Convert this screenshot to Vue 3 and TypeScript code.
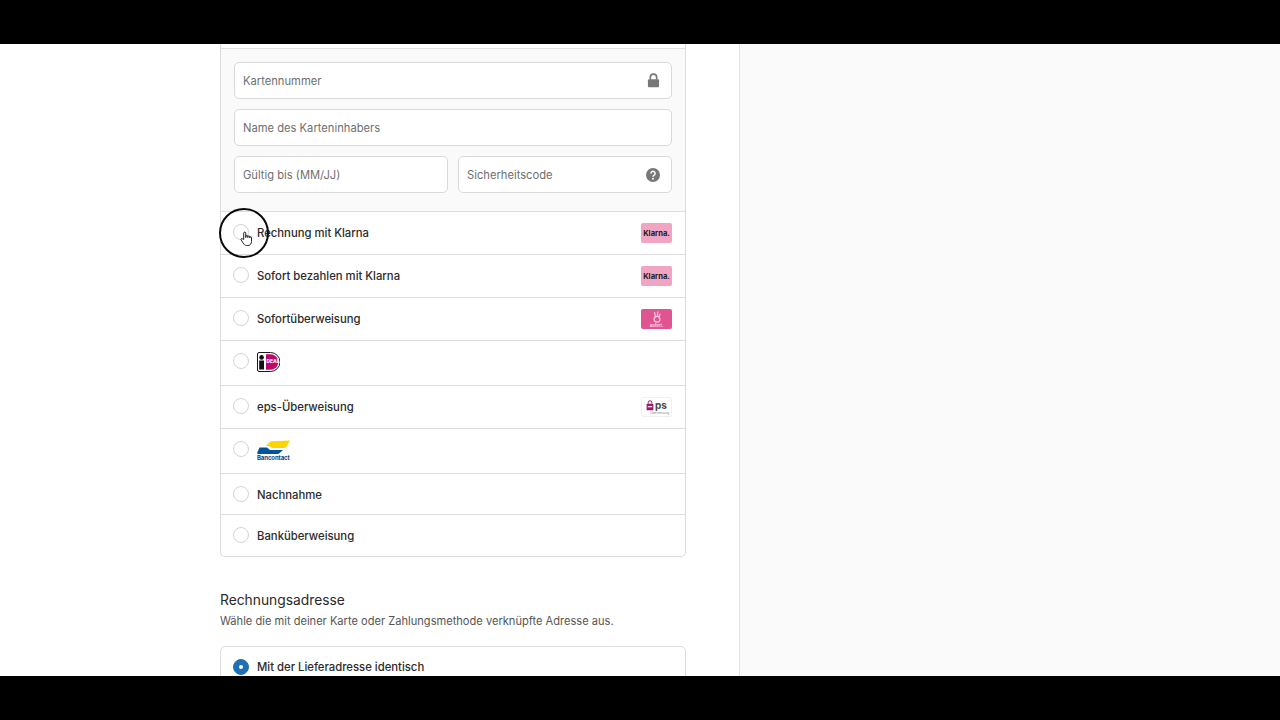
<script setup lang="ts">
interface Row { id: string; label?: string; logo?: string; badge?: string; h: number }
const rows: Row[] = [
  { id: 'r1', label: 'Rechnung mit Klarna', badge: 'klarna', h: 43 },
  { id: 'r2', label: 'Sofort bezahlen mit Klarna', badge: 'klarna', h: 43 },
  { id: 'r3', label: 'Sofortüberweisung', badge: 'sofort', h: 43 },
  { id: 'r4', logo: 'ideal', h: 45 },
  { id: 'r5', label: 'eps-Überweisung', badge: 'eps', h: 43 },
  { id: 'r6', logo: 'bancontact', h: 45 },
  { id: 'r7', label: 'Nachnahme', h: 41 },
  { id: 'r8', label: 'Banküberweisung', h: 42 },
]
</script>

<template>
  <div class="frame">
    <div class="bar top"></div>
    <main class="stage">
      <section class="left">
        <div class="column">
          <div class="card">
            <div class="strip"></div>
            <div class="panel">
              <div class="field">
                <span>Kartennummer</span>
                <svg class="ficon" viewBox="0 0 14 16" width="13" height="15">
                  <path d="M3.6 7V4.6a3.4 3.4 0 0 1 6.8 0V7" fill="none" stroke="#777" stroke-width="1.8" />
                  <rect x="1" y="6.6" width="12" height="8.6" rx="1" fill="#777" />
                </svg>
              </div>
              <div class="field"><span>Name des Karteninhabers</span></div>
              <div class="split">
                <div class="field"><span>Gültig bis (MM/JJ)</span></div>
                <div class="field">
                  <span>Sicherheitscode</span>
                  <svg class="ficon" viewBox="0 0 14 14" width="14" height="14">
                    <circle cx="7" cy="7" r="7" fill="#777" />
                    <path d="M4.9 5.4a2.1 2.1 0 1 1 3.2 1.8c-.7.4-1.1.8-1.1 1.5" fill="none" stroke="#fff" stroke-width="1.5" />
                    <circle cx="7" cy="10.8" r=".95" fill="#fff" />
                  </svg>
                </div>
              </div>
            </div>
            <div v-for="r in rows" :key="r.id" class="row" :style="{ height: r.h + 'px' }">
              <span class="radio"></span>
              <span v-if="r.label" class="label">{{ r.label }}</span>
              <svg v-if="r.logo === 'ideal'" class="ideal" viewBox="0 0 23 20" width="23" height="20">
                <path d="M.5 2A1.500 1.500 0 0 1 2 .5h11.500a9.500 9.500 0 0 1 0 19H2A1.500 1.500 0 0 1 .5 18z" fill="#fff" stroke="#1a1a1a" stroke-width="1" />
                <path d="M9 2.200h4.500a7.800 7.800 0 0 1 0 15.600H9z" fill="#c0066b" />
                <rect x="2.200" y="8.500" width="4.800" height="9" fill="#111" />
                <circle cx="4.600" cy="5.400" r="2.300" fill="#111" />
                <text x="9.600" y="10.800" class="ideal-t">DEAL</text>
              </svg>
              <span v-if="r.logo === 'bancontact'" class="banco">
                <svg viewBox="0 0 33 14" width="33" height="14">
                  <path d="M2.500 7.500h7.500l3 2.500h13l-3.500 3.300c-.5.5-1 .7-1.700.7H1.500C.4 14 0 13.300.3 12.500z" fill="#00549c" />
                  <path d="M15 1.200 33 .5l-3.200 5.800c-.6 1-1.300 1.700-2.500 1.700H15.500L12 6H8.800L12.500 2.300c.7-.7 1.500-1.100 2.500-1.100z" fill="#fbd500" />
                </svg>
                <span class="banco-t">Bancontact</span>
              </span>
              <span v-if="r.badge === 'klarna'" class="badge klarna">Klarna.</span>
              <span v-if="r.badge === 'sofort'" class="badge sofort">
                <svg viewBox="0 0 10 12" width="10" height="12">
                  <path d="M3.400 6 2.600 1.400M5.200 5.500 5.800 .8M7 6.500 8 3" fill="none" stroke="#f9c9dc" stroke-width="1.200" stroke-linecap="round" />
                  <circle cx="5" cy="8.200" r="2.900" fill="none" stroke="#f9c9dc" stroke-width="1.300" />
                </svg>
                <span class="sofort-t">Sofort.</span>
              </span>
              <span v-if="r.badge === 'eps'" class="badge eps">
                <span class="eps-main">
                  <svg viewBox="0 0 9 12" width="8" height="11">
                    <path d="M2.500 4V2.600a2 2 0 0 1 4 0V4" fill="none" stroke="#a3156d" stroke-width="1.100" />
                    <rect x=".7" y="4" width="7.600" height="7.400" rx="1" fill="#a3156d" />
                    <rect x="2" y="6.700" width="5" height="1.300" fill="#fff" />
                  </svg>
                  <span class="eps-t">ps</span>
                </span>
                <span class="eps-s">Überweisung</span>
              </span>
            </div>
          </div>

          <h2 class="title">Rechnungsadresse</h2>
          <p class="sub">Wähle die mit deiner Karte oder Zahlungsmethode verknüpfte Adresse aus.</p>

          <div class="card addr">
            <div class="row addr-row">
              <span class="radio on"></span>
              <span class="label">Mit der Lieferadresse identisch</span>
            </div>
          </div>
        </div>
      </section>
      <aside class="right"></aside>

      <div class="ring"></div>
      <svg class="hand" viewBox="0 0 14 17" width="13" height="16">
        <path d="M4 9V2.200a1.100 1.100 0 0 1 2.200 0V7l.1-1.300a1 1 0 0 1 2 0L8.400 7l.1-.9a1 1 0 0 1 2 .1v1.100l.1-.4a.9.9 0 0 1 1.800.2V11c0 2.500-1.300 4.500-3.900 4.500H7C5.300 15.500 4.500 14.500 3.500 13L1.300 9.700c-.8-1.300.8-2.300 1.700-1.200z" fill="#fff" stroke="#111" stroke-width="1" stroke-linejoin="round" />
      </svg>
    </main>
    <div class="bar bottom"></div>
  </div>
</template>

<style>
html, body { margin: 0; background: #000; }
</style>

<style scoped>
.frame {
  width: 1280px;
  height: 720px;
  display: flex;
  flex-direction: column;
  overflow: hidden;
  font-family: Inter, "Liberation Sans", sans-serif;
  color: #2a2a2a;
}
.bar { background: #000; }
.top { height: 44px; flex: none; }
.bottom { height: 44px; flex: none; }
.stage {
  position: relative;
  height: 632px;
  flex: none;
  display: flex;
  overflow: hidden;
  background: #fff;
}
.left {
  flex: none;
  width: 740px;
  box-sizing: border-box;
  border-right: 1px solid #e3e3e3;
  padding-left: 220px;
}
.column { width: 466px; }
.right { flex: 1; background: #fafafa; }
.card {
  border: 1px solid #dcdcdc;
  border-top: none;
  border-radius: 0 0 5px 5px;
  background: #fff;
}
.strip { height: 4px; }
.panel {
  background: #fafafa;
  border-top: 1px solid #e1e1e1;
  padding: 13px 13px 18px;
  display: flex;
  flex-direction: column;
  gap: 10px;
}
.field {
  height: 37px;
  box-sizing: border-box;
  border: 1px solid #d9d9d9;
  border-radius: 5px;
  background: #fff;
  display: flex;
  align-items: center;
  justify-content: space-between;
  padding: 0 11px 0 8px;
  font-size: 11.2px;
  color: #6f6f6f;
}
.split { display: grid; grid-template-columns: 1fr 1fr; gap: 10px; }
.ficon { flex: none; }
.row {
  box-sizing: border-box;
  border-top: 1px solid #dedede;
  display: flex;
  align-items: flex-start;
  padding: 12px 13px 0 12px;
  gap: 8px;
}
.radio {
  width: 14px;
  height: 14px;
  border: 1px solid #d4d4d4;
  border-radius: 50%;
  background: #fff;
  flex: none;
}
.radio.on {
  background: #1f6fb5;
  border-color: #1f6fb5;
  position: relative;
}
.radio.on::after {
  content: "";
  position: absolute;
  left: 5px;
  top: 5px;
  width: 4px;
  height: 4px;
  border-radius: 50%;
  background: #fff;
}
.label { font-size: 11.3px; line-height: 18px; font-weight: 500; color: #2b2b2b; }
.addr-row .label { line-height: 16px; }
.badge {
  margin-left: auto;
  margin-top: -1px;
  width: 31px;
  height: 20px;
  border-radius: 2px;
  display: flex;
  align-items: center;
  justify-content: center;
}
.klarna {
  background: #f2a5c3;
  color: #1b1b1b;
  font-size: 7.6px;
  font-weight: 700;
}
.sofort {
  background: #df5491;
  flex-direction: column;
}
.sofort-t { font-size: 4px; line-height: 5px; font-weight: 700; color: #fbd5e3; }
.eps {
  background: #fff;
  border: 1px solid #f0f0f0;
  box-sizing: border-box;
  flex-direction: column;
}
.eps-main { display: flex; align-items: center; gap: 1px; height: 11px; }
.eps-t { font-size: 10px; line-height: 10px; font-weight: 700; color: #4a4a4a; }
.eps-s { font-size: 3px; line-height: 4px; color: #888; align-self: flex-end; margin-right: 2px; }
.ideal { flex: none; display: block; margin-top: -1px; }
.ideal-t { font-size: 4.8px; font-weight: 800; fill: #fff; font-family: Inter, sans-serif; }
.banco { display: flex; flex-direction: column; width: 33px; margin-top: -1px; }
.banco svg { display: block; }
.banco-t { font-size: 6px; line-height: 7px; font-weight: 700; color: #0a3f7c; letter-spacing: -0.1px; }
.title {
  margin: 34px 0 0;
  font-size: 13.8px;
  line-height: 18px;
  font-weight: 400;
  color: #2a2a2a;
}
.sub {
  margin: 4px 0 0;
  font-size: 11.1px;
  line-height: 16px;
  color: #555;
}
.addr {
  margin-top: 17px;
  border-top: 1px solid #dcdcdc;
  border-radius: 5px;
}
.addr-row { border-top: none; height: 40px; }
.ring {
  position: absolute;
  left: 219px;
  top: 164px;
  width: 46px;
  height: 46px;
  border: 2.5px solid #0a0a0a;
  border-radius: 50%;
}
.hand { position: absolute; left: 240px; top: 187px; }
</style>
